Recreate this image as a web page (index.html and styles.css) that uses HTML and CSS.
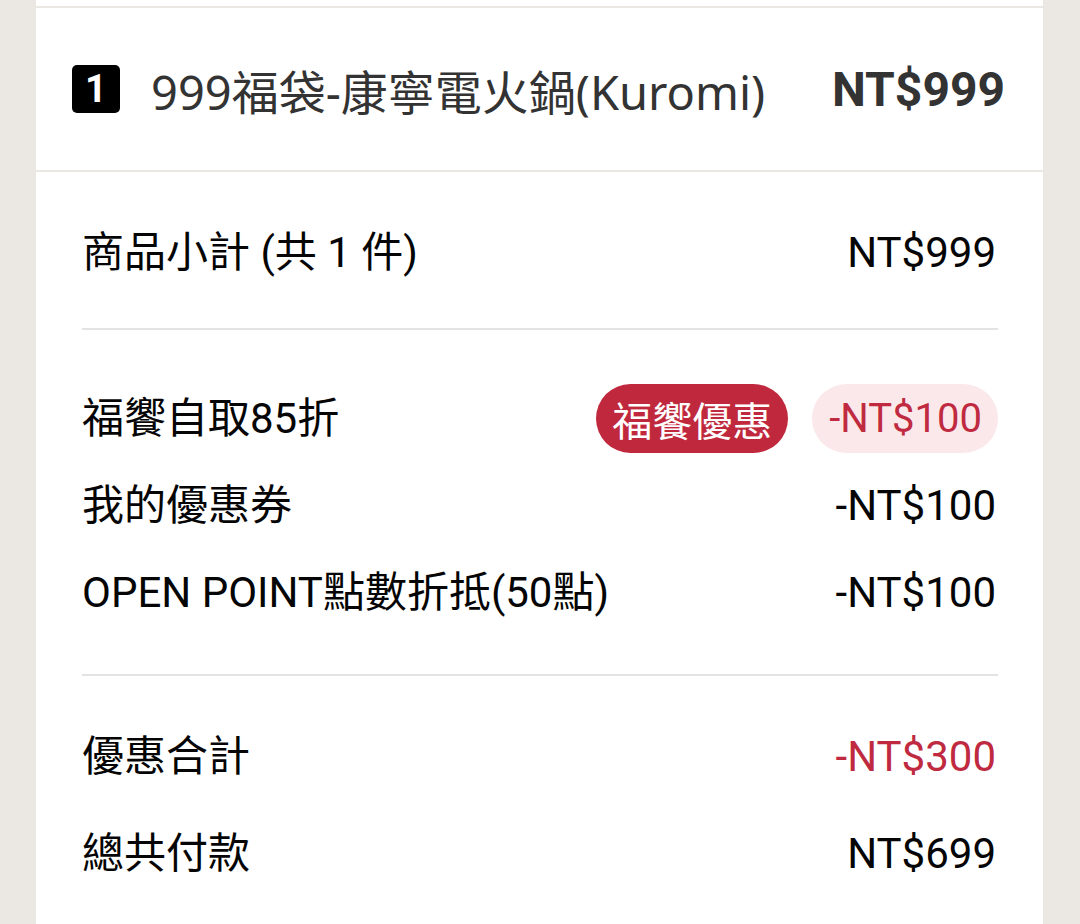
FILE: index.html
```html
<!DOCTYPE html>
<html lang="zh-Hant">
<head>
<meta charset="utf-8">
<title>訂單明細</title>
<link rel="stylesheet" href="styles.css">
</head>
<body>
<div class="card">
  <div class="card-top"></div>
  <div class="item">
    <span class="item-no">1</span>
    <span class="item-name">999福袋-康寧電火鍋(Kuromi)</span>
    <span class="item-price">NT$999</span>
  </div>
  <div class="block block-sub">
    <div class="row">
      <span class="label">商品小計 (共 1 件)</span>
      <span class="amount">NT$999</span>
    </div>
  </div>
  <div class="block block-disc">
    <div class="row">
      <span class="label">福饗自取85折</span>
      <span class="tags">
        <span class="badge">福饗優惠</span>
        <span class="pill">-NT$100</span>
      </span>
    </div>
    <div class="row">
      <span class="label">我的優惠券</span>
      <span class="amount">-NT$100</span>
    </div>
    <div class="row">
      <span class="label">OPEN POINT點數折抵(50點)</span>
      <span class="amount">-NT$100</span>
    </div>
  </div>
  <div class="block block-total">
    <div class="row">
      <span class="label">優惠合計</span>
      <span class="amount red">-NT$300</span>
    </div>
    <div class="row">
      <span class="label">總共付款</span>
      <span class="amount">NT$699</span>
    </div>
  </div>
</div>
</body>
</html>
```
FILE: styles.css
```css
html, body {
  margin: 0;
  padding: 0;
  background: #ebe8e4;
}
body {
  height: 924px;
  overflow: hidden;
}
.card {
  width: 1007px;
  margin-left: 36px;
  background: #ffffff;
  min-height: 924px;
  font-family: Roboto, "Noto Sans CJK TC", sans-serif;
  color: #050505;
}
.card-top {
  height: 6px;
  border-bottom: 2px solid #ebe8e4;
}
.item {
  height: 162px;
  display: flex;
  align-items: center;
  padding: 0 38px 0 36px;
  border-bottom: 2px solid #ebe8e4;
}
.item-no {
  width: 48px;
  height: 48px;
  border-radius: 5px;
  background: #000000;
  color: #ffffff;
  font-family: Roboto, sans-serif;
  font-weight: 700;
  font-size: 38px;
  display: flex;
  align-items: center;
  justify-content: center;
  flex: none;
}
.item-name {
  flex: 1;
  margin-left: 31px;
  font-family: "Noto Sans", "Noto Sans CJK TC", sans-serif;
  font-size: 47px;
  color: #333333;
}
.item-price {
  font-family: Roboto, sans-serif;
  font-weight: 700;
  font-size: 48px;
  color: #333333;
}
.block {
  margin: 0 45px 0 46px;
  display: flex;
  flex-direction: column;
}
.block-sub {
  padding: 46px 0 41px;
  border-bottom: 2px solid #e3e3e3;
}
.block-disc {
  padding: 54px 0 47px;
  gap: 18px;
  border-bottom: 2px solid #e3e3e3;
}
.block-total {
  padding: 46px 0 30px;
  gap: 28px;
}
.row {
  height: 69px;
  display: flex;
  align-items: center;
  justify-content: space-between;
  font-size: 42px;
}
.label {
  margin-bottom: 9px;
}
.amount {
  margin-right: 2px;
}
.red {
  color: #c02a40;
}
.tags {
  display: flex;
  align-items: center;
  gap: 24px;
}
.badge {
  height: 69px;
  padding: 0 16px;
  border-radius: 35px;
  background: #c0293d;
  color: #ffffff;
  font-size: 40px;
  display: flex;
  align-items: center;
}
.pill {
  height: 69px;
  padding: 0 16px 0 17px;
  border-radius: 35px;
  background: #fbe8ea;
  color: #c02a40;
  font-size: 40px;
  display: flex;
  align-items: center;
}
```
